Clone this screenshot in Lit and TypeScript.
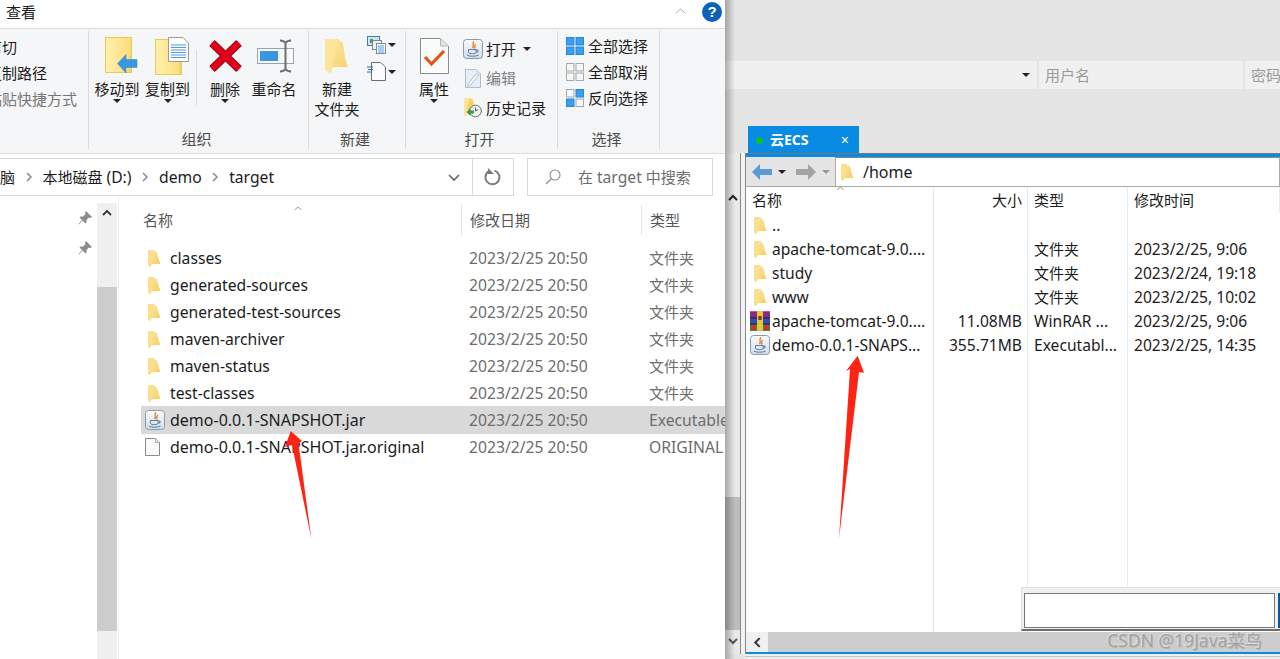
import { LitElement, html, css, svg } from "lit";
import { customElement } from "lit/decorators.js";

const smallFolder = () => html`<svg class="fold" width="13" height="18" viewBox="0 0 13 18">
  <defs><linearGradient id="fg" x1="0" x2="1" y1="0" y2="1"><stop offset="0" stop-color="#fdeaa8"/><stop offset="1" stop-color="#f5cb5c"/></linearGradient></defs>
  <path d="M0 1H5.5L9 3.5 11 11 12.5 15H3.5L2 18 0 16.5Z" fill="url(#fg)"/><path d="M0 1H5.5V4.5L4 15 2 18 0 16.5Z" fill="#fbdf8e"/></svg>`;

const javaIcon = (s = 20) => html`<svg width=${s} height=${s} viewBox="0 0 20 20">
  <defs><linearGradient id="jg" x1="0" x2="0" y1="0" y2="1"><stop offset="0" stop-color="#fbfbfb"/><stop offset="1" stop-color="#cfdce8"/></linearGradient></defs>
  <rect x=".5" y=".5" width="19" height="19" rx="3" fill="url(#jg)" stroke="#8a9bab"/>
  <path d="M11 2.5C8 5 12 6 9.5 9M12.5 5C10.5 7 13 7.5 11.5 9.5" fill="none" stroke="#e2711d" stroke-width="1.2"/>
  <path d="M5.5 10.5H13V13.5C13 15 6 15 5.5 13.5ZM13 11H15V13H13" fill="none" stroke="#5a7da0" stroke-width="1"/>
  <path d="M4 16.2C7 17.6 12 17.6 15.5 16.2" fill="none" stroke="#5a7da0" stroke-width="1"/></svg>`;

const rarIcon = () => html`<svg width="20" height="20" viewBox="0 0 20 20">
  <rect x="0" y="0" width="20" height="7" fill="#8a2a86"/><rect x="0" y="7" width="20" height="6" fill="#2a4fb0"/><rect x="0" y="13" width="20" height="7" fill="#2f8f3a"/>
  <rect x="0" y="0" width="20" height="1" fill="#c04fb0"/><rect x="0" y="6.4" width="20" height="1" fill="#30103a"/><rect x="0" y="12.6" width="20" height="1" fill="#102050"/>
  <rect x="7" y="0" width="6" height="20" fill="#e9c33b"/><rect x="8.3" y="5" width="3.4" height="4" fill="#6b4a10"/><rect x="14" y="14" width="5" height="5" fill="#c8352b"/><rect x="1" y="14" width="5" height="5" fill="#c8352b"/></svg>`;

const fileIcon = () => html`<svg width="15" height="18" viewBox="0 0 15 18"><path d="M.5.5H10.5L14.5 4.5V17.5H.5Z" fill="#f8fafb" stroke="#8a8a8a"/><path d="M10.5.5V4.5H14.5" fill="#e4e4e4" stroke="#b0b0b0"/></svg>`;

const caret = () => html`<i class="caret"></i>`;

const bigFolderBody = () => svg`<rect x=".5" y=".5" width="26" height="35" fill="url(#by)" stroke="#e8c95a"/><path d="M25 18V35" stroke="#e8c95a"/>`;
const byDefs = () => svg`<defs><linearGradient id="by" x1="0" x2="1"><stop offset="0" stop-color="#fff0ae"/><stop offset="1" stop-color="#fbdc7a"/></linearGradient></defs>`;

const moveIcon = () => html`<svg width="33" height="38" viewBox="0 0 33 38">${byDefs()}${bigFolderBody()}
  <path d="M12.5 26.5 21 17.5V22.5H32V30.5H21V36Z" fill="#3b95e0" stroke="#2f86d0" stroke-width=".5"/></svg>`;
const copyIcon = () => html`<svg width="34" height="39" viewBox="0 0 34 39">${byDefs()}<g transform="translate(0,2)">${bigFolderBody()}</g>
  <path d="M13.5.5H28L33.5 6V24.5H13.5Z" fill="#fff" stroke="#9a9a9a"/><path d="M16 8H31M16 10.5H31M16 13H31M16 15.5H31M16 18H31M16 20.5H31" stroke="#4f9be0" stroke-width="1.2"/></svg>`;
const deleteIcon = () => html`<svg width="33" height="32" viewBox="0 0 33 32"><path d="M3 3 30 29M30 3 3 29" stroke="#8c0f1c" stroke-width="8"/><path d="M3 3 30 29M30 3 3 29" stroke="#e2001a" stroke-width="6"/></svg>`;
const renameIcon = () => html`<svg width="37" height="34" viewBox="0 0 37 34"><rect x=".5" y="9.5" width="36" height="15" fill="#f7f8f9" stroke="#9aa3ab"/><rect x="3" y="12" width="18" height="10" fill="#3b95e0"/>
  <path d="M23 1.5C26 1.5 27.5 2.5 28.5 4V30C27.5 31.5 26 32.5 23 32.5M34 1.5C31 1.5 29.5 2.5 28.5 4M34 32.5C31 32.5 29.5 31.5 28.5 30" fill="none" stroke="#6e6e6e" stroke-width="2"/></svg>`;
const newFolderIcon = () => html`<svg width="24" height="35" viewBox="0 0 24 35"><defs><linearGradient id="nf" x1="0" x2="1" y1="0" y2="1"><stop offset="0" stop-color="#fdeaa8"/><stop offset="1" stop-color="#f6d06a"/></linearGradient></defs>
  <path d="M0 0H13L18 4 20 19 23 28H8L5 34 0 31Z" fill="url(#nf)"/><path d="M0 0H12.5V5L7 28 5 34 0 31Z" fill="#fde49b"/></svg>`;
const easyIcon = () => html`<svg width="19" height="18" viewBox="0 0 19 18"><rect x=".5" y=".5" width="12" height="9" fill="#cfe4f5" stroke="#3f7fb5"/><rect x="5.5" y="4.5" width="9" height="9" fill="#eef0f2" stroke="#7a8a99"/><rect x="9.5" y="7.5" width="9" height="10" fill="#fff" stroke="#8a8a8a"/><path d="M11 10H17M11 12H17M11 14H17M11 16H17" stroke="#4f9be0"/><rect x="3" y="3" width="3" height="4" fill="#5a9a4a"/></svg>`;
const newItemIcon = () => html`<svg width="19" height="19" viewBox="0 0 19 19"><path d="M4.5.5H13.5L18.5 5V18.5H4.5Z" fill="#fbfcfd" stroke="#6e6e6e"/><path d="M0 5H6M1 7.5H6M0 10H5" stroke="#1f6fc0" stroke-width="1"/></svg>`;
const propsIcon = () => html`<svg width="29" height="36" viewBox="0 0 29 36"><path d="M.5.5H20.5L28.5 8V35.5H.5Z" fill="#fafbfb" stroke="#8c8c8c"/><path d="M20.5.5V8H28.5" fill="#e3e3e3" stroke="#b4b4b4"/><path d="M5 19 11.5 26 24 13" fill="none" stroke="#e8501c" stroke-width="3.2"/></svg>`;
const editIcon = () => html`<svg width="16" height="19" viewBox="0 0 16 19"><path d="M.5.5H11L15.5 5V18.5H.5Z" fill="#e6eef7" stroke="#a9bdd4"/><path d="M3 15 12 4 14 6 5 16.5 2.5 17Z" fill="#fff" stroke="#a9bdd4"/></svg>`;
const historyIcon = () => html`<svg width="18" height="20" viewBox="0 0 18 20"><path d="M0 0H6L9 2 11 12H3L2 18 0 17Z" fill="#f6cf62"/><path d="M0 0H5.5L3 12 2 18 0 17Z" fill="#fde49b"/><circle cx="11.5" cy="13" r="5.8" fill="#f2f2f2" stroke="#6e6e6e"/><path d="M11.5 9.5V13L14 11.5" fill="none" stroke="#555"/><path d="M2.5 14 6.5 10V12.5H10V15.5H6.5V18Z" fill="#36a13c"/></svg>`;
const selIcon = (on: boolean[]) => html`<svg width="18" height="18" viewBox="0 0 18 18">${[[0, 0], [9.5, 0], [0, 9.5], [9.5, 9.5]].map(([x, y], i) => svg`<rect x=${x + .5} y=${y + .5} width="7.5" height="7.5" fill=${on[i] ? "#39a0f0" : "#f5f6f7"} stroke=${on[i] ? "#2b86d6" : "#a8a8a8"} />`)}</svg>`;
const chev = (d: string, c = "#7c7c7c", w = 8, h = 10, sw = 1.5) => html`<svg width=${w} height=${h} viewBox="0 0 8 10"><path d=${d} fill="none" stroke=${c} stroke-width=${sw}/></svg>`;
const crumbSep = () => html`<span class="sep">${chev("M2 1 6 5 2 9", "#8a8a8a")}</span>`;
const pin = () => html`<svg width="14" height="14" viewBox="0 0 14 14"><path d="M8 0 14 6 12.5 7 11 6.5 8.5 9 8.5 11.5 7.5 12.5 4.5 9.5 1 13.5.5 13 4 9 1.5 6.5 2.5 5.5 5 5.5 7.5 3 7 1.5Z" fill="#8c8c8c"/></svg>`;
const cj = (s: string) => (s === "文件夹" ? html`<span class="cj">${s}</span>` : s);

const leftRows: [string, string, string][] = [
  ["classes", "d", "文件夹"], ["generated-sources", "d", "文件夹"], ["generated-test-sources", "d", "文件夹"],
  ["maven-archiver", "d", "文件夹"], ["maven-status", "d", "文件夹"], ["test-classes", "d", "文件夹"],
  ["demo-0.0.1-SNAPSHOT.jar", "j", "Executable Jar File"], ["demo-0.0.1-SNAPSHOT.jar.original", "f", "ORIGINAL 文件"],
];
const rightRows: [string, string, string, string, string][] = [
  ["..", "d", "", "", ""],
  ["apache-tomcat-9.0....", "d", "", "文件夹", "2023/2/25, 9:06"],
  ["study", "d", "", "文件夹", "2023/2/24, 19:18"],
  ["www", "d", "", "文件夹", "2023/2/25, 10:02"],
  ["apache-tomcat-9.0....", "r", "11.08MB", "WinRAR ...", "2023/2/25, 9:06"],
  ["demo-0.0.1-SNAPS...", "j", "355.71MB", "Executabl...", "2023/2/25, 14:35"],
];

@customElement("app-root")
export class AppRoot extends LitElement {
  static styles = css`
    :host { display: block; position: relative; width: 1280px; height: 659px; overflow: hidden; background: #e5e5e5;
      font: 15px/20px "Noto Sans", "Noto Sans CJK SC", sans-serif; color: #1c1c1c; }
    * { box-sizing: border-box; }
    svg { display: block; flex: none; }
    .caret { display: block; width: 0; height: 0; border: 4px solid transparent; border-top-color: #222; border-bottom: 0; }
    .la { font-size: 15.7px; }
    .cj { font-size: 15px; }

    /* explorer window */
    .explorer { position: absolute; left: 0; top: 0; width: 725px; height: 659px; background: #fff; display: flex; flex-direction: column; overflow: hidden; }
    .tabs { height: 28px; flex: none; display: flex; align-items: center; padding: 0 3px 4px 6px; }
    .tabs .t { flex: 1; }
    .help { width: 20px; height: 20px; border-radius: 50%; background: #0b62b8; color: #fff; font: bold 15px/20px "Liberation Sans", sans-serif; text-align: center; margin-left: 16px; }
    .ribbon { height: 126px; flex: none; display: flex; background: #f5f6f7; border-top: 1px solid #dadbdc; border-bottom: 1px solid #dadbdc; padding-top: 2px; }
    .grp { flex: none; display: flex; flex-direction: column; border-right: 1px solid #dadbdc; height: 118px; }
    .grp .body { flex: 1; display: flex; min-height: 0; }
    .grp .lab { height: 20px; text-align: center; color: #4a4a4a; line-height: 20px; padding-right: 4px; }
    .g1 { width: 89px; } .g2 { width: 220px; } .g3 { width: 97px; } .g4 { width: 152px; } .g5 { width: 102px; }
    .clip { display: flex; flex-direction: column; overflow: hidden; width: 100%; padding-top: 6px; gap: 6px; white-space: nowrap; }
    .clip span { display: block; margin-left: -13px; }
    .clip .c3 { color: #757575; }
    .big { display: flex; flex-direction: column; align-items: center; flex: none; padding-top: 4px; }
    .big .ic { height: 42px; display: flex; align-items: center; justify-content: center; }
    .big .tx { line-height: 20px; margin-top: 2px; white-space: nowrap; text-align: center; }
    .big .caret { margin-top: 0; }
    .shift4 { padding-left: 8px; }
    .shift1 { padding-left: 3px; }
    .vsep { width: 1px; height: 55px; background: #dadbdc; margin: 19px 4px 0 3px; flex: none; }
    .minis { display: flex; flex-direction: column; gap: 8px; padding-top: 5px; margin-left: 6px; }
    .mini { display: flex; align-items: center; gap: 2px; }
    .col { display: flex; flex-direction: column; padding: 3px 0 0 1px; }
    .rrow { height: 29.5px; display: flex; align-items: center; gap: 3px; white-space: nowrap; }
    .rrow .slot { width: 20px; display: flex; justify-content: center; }
    .rrow .caret { margin-left: 4px; }
    .grey { color: #808080; }
    .sels { display: flex; flex-direction: column; padding: 2px 0 0 8px; }
    .srow { height: 26px; display: flex; align-items: center; gap: 4px; white-space: nowrap; }

    .addr { height: 38px; margin-top: 4px; flex: none; display: flex; }
    .crumbs { width: 473px; border: 1px solid #d9d9d9; border-left: 0; display: flex; align-items: center; white-space: nowrap; overflow: hidden; padding-right: 12px; }
    .sep { width: 27.5px; display: flex; justify-content: center; }
    .crumbs .cd { margin-left: auto; }
    .refresh { width: 41px; border: 1px solid #d9d9d9; border-left: 0; display: flex; align-items: center; justify-content: center; }
    .search { width: 186px; margin-left: 13px; border: 1px solid #d9d9d9; display: flex; align-items: center; color: #6d6d6d; padding-left: 17px; gap: 17px; white-space: nowrap; }

    .main { flex: 1; display: flex; min-height: 0; }
    .nav { width: 97px; flex: none; display: flex; flex-direction: column; align-items: flex-end; gap: 16px; padding: 15px 5px 0 0; }
    .vbar { width: 20px; flex: none; margin-top: 7px; background: #f0f0f0; display: flex; flex-direction: column; }
    .vbar .up { height: 84px; display: flex; justify-content: center; padding-top: 6px; }
    .vbar .th { height: 344px; background: #cdcdcd; }
    .list { flex: 1; min-width: 0; border-left: 1px solid #f0f0f0; margin-left: 1px; padding: 8px 0 0 22px; overflow: hidden; position: relative; }
    .lh { display: grid; grid-template-columns: 328px 180px 1fr; height: 31px; align-items: center; color: #555; position: relative; }
    .lh > span { padding-left: 2px; }
    .lh > span + span { border-left: 1px solid #e5e5e5; height: 30px; line-height: 30px; padding-left: 8px; margin-left: -8px; }
    .sortup { position: absolute; left: 151px; top: 2px; }
    .lrows { margin-top: 9px; font-size: 15.7px; }
    .lr { display: grid; grid-template-columns: 328px 180px 1fr; height: 27px; align-items: center; white-space: nowrap; overflow: hidden; }
    .lr.sel { background: #d9d9d9; height: 28px; margin-bottom: -1px; }
    .lr.file .n { font-size: 16px; }
    .lr .n { display: flex; align-items: center; padding-left: 4px; }
    .lr .n .slot { width: 25px; display: flex; padding-left: 3px; }
    .lr.file .n .slot { padding-left: 0; }
    .lr .m { color: #6d6d6d; }

    /* strip of the window behind */
    .behind { position: absolute; left: 725px; top: 153px; width: 20px; height: 501px; background: #f3f3f3; }
    .behind .rail { width: 16px; height: 100%; border-right: 1.5px solid #8a8a8a; background: #e9e9e9; display: flex; flex-direction: column; align-items: center; padding-top: 40px; }
    .behind .tb { width: 100%; height: 133px; background: #bdbdbd; margin-top: 294px; }
    .behind .dn { margin-top: 6px; }
    .shade { position: absolute; left: 725px; top: 0; width: 10px; height: 659px; background: linear-gradient(to right, rgba(0,0,0,.28), rgba(0,0,0,0)); }

    /* top bar of the terminal app */
    .bar { position: absolute; left: 725px; right: 0; top: 61px; height: 28px; display: flex; gap: 2px; color: #9a9a9a; }
    .bar > div { background: #f0f0f0; display: flex; align-items: center; padding: 0 6px; white-space: nowrap; overflow: hidden; }
    .b1 { width: 312px; justify-content: flex-end; padding-right: 7px !important; }
    .b2 { width: 204px; } .b3 { flex: 1; }

    /* sftp panel */
    .tab { position: absolute; left: 748px; top: 126px; width: 111px; height: 27px; background: #0a8be3; color: #fff; display: flex; align-items: center; font-size: 14px; padding: 1px 10px 0 8px; }
    .dot { width: 7px; height: 7px; border-radius: 50%; background: #0cbf2a; margin-right: 7px; }
    .tab .nm { flex: 1; font-weight: 700; }
    .tab .x { font: 14px "Liberation Sans", sans-serif; }
    .sftp { position: absolute; left: 745px; right: 0; top: 153px; height: 501px; border-top: 1px solid #777; display: flex; flex-direction: column; background: #fff; border-left: 1px solid #888; }
    .blue { height: 3px; background: #0a8be3; flex: none; }
    .tools { height: 30px; flex: none; display: flex; align-items: center; background: #e5e5e5; border-bottom: 1px solid #aaa; padding-left: 6px; }
    .tools .ad { margin-left: 5px; align-self: stretch; flex: 1; background: #fff; border: 1px solid #aaa; border-top-color: #888; border-bottom: 0; display: flex; align-items: center; padding-left: 5px; gap: 9px; font-size: 16px; }
    .tools .caret { margin-left: 6px; }
    .tools .caret.g { border-top-color: #999; }
    .tools .fwd { margin-left: 10px; }
    .tbl { flex: 1; display: flex; flex-direction: column; min-height: 0; position: relative; font-size: 15.6px; }
    .tr { display: grid; grid-template-columns: 188px 94px 100px 1fr; height: 24px; white-space: nowrap; }
    .tr > div { border-right: 1px solid #e4ecf5; display: flex; align-items: center; padding-left: 6px; overflow: hidden; }
    .tr > div:first-child { padding-left: 4px; gap: 2px; }
    .tr > div:nth-child(2) { justify-content: flex-end; padding: 0 5px 0 0; }
    .tr > div:last-child { border-right: 0; }
    .tr.h { height: 26px; font-size: 15px; }
    .tr.h > div:first-child { padding-left: 6px; }
    .tr.fill { flex: 1; height: auto; }
    .tr .slot { width: 20px; display: flex; justify-content: center; flex: none; }
    .sortup2 { position: absolute; left: 89px; top: -1px; }
    .hscroll { height: 20px; flex: none; display: flex; }
    .hscroll .l { width: 22px; background: #f0f0f0; display: flex; align-items: center; justify-content: center; }
    .hscroll .r { flex: 1; background: #cdcdcd; }
    .botblue { height: 2px; background: #0a8be3; flex: none; }
    .dlg { position: absolute; left: 1021px; top: 587px; right: 0; height: 44px; background: #f0f0f0; border-top: 1px solid #e0e0e0; border-left: 1px solid #e0e0e0; border-bottom: 2px solid #6e6e6e; display: flex; gap: 3px; padding: 5px 0 1px 2px; }
    .dlg .inp { width: 251px; background: #fff; border: 1px solid #777; }
    .dlg .btn { flex: 1; background: #cde4f7; border: 1px solid #0a5a9c; }
    .bot { position: absolute; left: 745px; right: 0; top: 654px; height: 5px; background: #f0f0f0; }
    .bot i { display: block; height: 1px; margin-top: 2px; background: #c4c4c4; }
    .wm { position: absolute; left: 1107px; top: 630px; font: 17.5px/20px "Noto Sans", "Noto Sans CJK SC", sans-serif; color: #a4a4a4; text-shadow: 1px 1px 0 #6f6f6f33, -1px -1px 0 #fff6; white-space: nowrap; }
    .arrow { position: absolute; left: 0; top: 0; pointer-events: none; }
  `;

  render() {
    return html`
      <div class="bar"><div class="b1">${caret()}</div><div class="b2">用户名</div><div class="b3">密码</div></div>

      <div class="behind"><div class="rail">
        ${chev("M0 7 4 3 8 7", "#222", 12, 10, 2)}
        <div class="tb"></div>
        <div class="dn">${chev("M0 3 4 7 8 3", "#555", 12, 10, 2)}</div>
      </div></div>
      <div class="shade"></div>

      <div class="tab"><i class="dot"></i><span class="nm">云ECS</span><span class="x">×</span></div>
      <div class="sftp">
        <div class="blue"></div>
        <div class="tools">
          <svg width="20" height="16" viewBox="0 0 20 16"><path d="M0 8 8 0V5H20V11H8V16Z" fill="#5b9bd5"/></svg>${caret()}
          <svg class="fwd" width="20" height="16" viewBox="0 0 20 16"><path d="M20 8 12 0V5H0V11H12V16Z" fill="#a3a3a3"/></svg><i class="caret g"></i>
          <div class="ad">${smallFolder()}<span>/home</span></div>
        </div>
        <div class="tbl">
          <div class="tr h"><div>名称</div><div>大小</div><div>类型</div><div>修改时间</div>
            <span class="sortup2">${chev("M0 5 4 1 8 5", "#777", 11, 8, 1)}</span></div>
          ${rightRows.map(r => html`<div class="tr"><div><span class="slot">${r[1] === "d" ? smallFolder() : r[1] === "r" ? rarIcon() : javaIcon()}</span><span>${r[0]}</span></div><div>${r[2]}</div><div>${cj(r[3])}</div><div>${r[4]}</div></div>`)}
          <div class="tr fill"><div></div><div></div><div></div><div></div></div>
          <div class="hscroll"><div class="l">${chev("M6 1 2 5 6 9", "#333", 9, 11, 1.8)}</div><div class="r"></div></div>
        </div>
        <div class="botblue"></div>
      </div>
      <div class="dlg"><div class="inp"></div><div class="btn"></div></div>
      <div class="bot"><i></i></div>
      <div class="wm">CSDN @19Java菜鸟</div>

      <div class="explorer">
        <div class="tabs"><span class="t">查看</span>${chev("M0 7 6 1 12 7", "#a8a8a8", 14, 8, 1.2)}<div class="help">?</div></div>
        <div class="ribbon">
          <div class="grp g1"><div class="body"><div class="clip"><span>剪切</span><span>复制路径</span><span class="c3">粘贴快捷方式</span></div></div></div>
          <div class="grp g2"><div class="body">
            <div class="big" style="width:50px;margin-left:3px"><div class="ic shift4">${moveIcon()}</div><div class="tx">移动到</div>${caret()}</div>
            <div class="big" style="width:51px"><div class="ic shift4">${copyIcon()}</div><div class="tx">复制到</div>${caret()}</div>
            <div class="vsep"></div>
            <div class="big" style="width:48px"><div class="ic">${deleteIcon()}</div><div class="tx">删除</div>${caret()}</div>
            <div class="big" style="width:50px"><div class="ic shift1">${renameIcon()}</div><div class="tx">重命名</div></div>
          </div><div class="lab">组织</div></div>
          <div class="grp g3"><div class="body">
            <div class="big" style="width:48px;margin-left:4px"><div class="ic">${newFolderIcon()}</div><div class="tx">新建<br />文件夹</div></div>
            <div class="minis"><div class="mini">${easyIcon()}${caret()}</div><div class="mini">${newItemIcon()}${caret()}</div></div>
          </div><div class="lab">新建</div></div>
          <div class="grp g4"><div class="body">
            <div class="big" style="width:56px"><div class="ic">${propsIcon()}</div><div class="tx">属性</div>${caret()}</div>
            <div class="col">
              <div class="rrow"><span class="slot">${javaIcon()}</span>打开${caret()}</div>
              <div class="rrow grey"><span class="slot">${editIcon()}</span>编辑</div>
              <div class="rrow"><span class="slot">${historyIcon()}</span>历史记录</div>
            </div>
          </div><div class="lab">打开</div></div>
          <div class="grp g5"><div class="body"><div class="sels">
            <div class="srow">${selIcon([true, true, true, true])}全部选择</div>
            <div class="srow">${selIcon([false, false, false, false])}全部取消</div>
            <div class="srow">${selIcon([false, true, true, false])}反向选择</div>
          </div></div><div class="lab">选择</div></div>
        </div>
        <div class="addr">
          <div class="crumbs"><span>脑</span>${crumbSep()}<span>本地磁盘 <span class="la">(D:)</span></span>${crumbSep()}<span class="la">demo</span>${crumbSep()}<span class="la">target</span><span class="cd">${chev("M0 3 5 8 10 3", "#666", 14, 10, 1.6)}</span></div>
          <div class="refresh"><svg width="18" height="18" viewBox="0 0 18 18"><path d="M10.5 2.6A7 7 0 1 1 5 3.2" fill="none" stroke="#7a7a7a" stroke-width="2"/><path d="M4 0V6H10Z" fill="#7a7a7a"/></svg></div>
          <div class="search"><svg width="16" height="16" viewBox="0 0 16 16"><circle cx="10" cy="6" r="5" fill="none" stroke="#8a8a8a" stroke-width="1.1"/><path d="M6.5 9.5 1 15" stroke="#8a8a8a" stroke-width="1.2"/></svg><span>在 <span class="la">target</span> 中搜索</span></div>
        </div>
        <div class="main">
          <div class="nav">${pin()}${pin()}</div>
          <div class="vbar"><div class="up">${chev("M0 6 4 2 8 6", "#333", 12, 10, 1.8)}</div><div class="th"></div></div>
          <div class="list">
            <div class="lh"><span>名称</span><span>修改日期</span><span>类型</span><div class="sortup">${chev("M0 5 4 1 8 5", "#777", 12, 8, 1)}</div></div>
            <div class="lrows">
              ${leftRows.map(r => html`<div class="lr ${r[1] === "j" ? "sel file" : r[1] === "f" ? "file" : ""}"><div class="n"><span class="slot">${r[1] === "d" ? smallFolder() : r[1] === "j" ? javaIcon() : fileIcon()}</span>${r[0]}</div><div class="m">2023/2/25 20:50</div><div class="m">${cj(r[2])}</div></div>`)}
            </div>
          </div>
        </div>
      </div>

      <svg class="arrow" width="1280" height="659" viewBox="0 0 1280 659">
        <path d="M290.7 431 302 441 298.5 443.5 311.3 538.5 292 445 285 447Z" fill="#ff2314"/>
        <path d="M857.7 355.7 864 372.7 859 372 839 538.5 850 369 846 371Z" fill="#ff2314"/>
      </svg>
    `;
  }
}
